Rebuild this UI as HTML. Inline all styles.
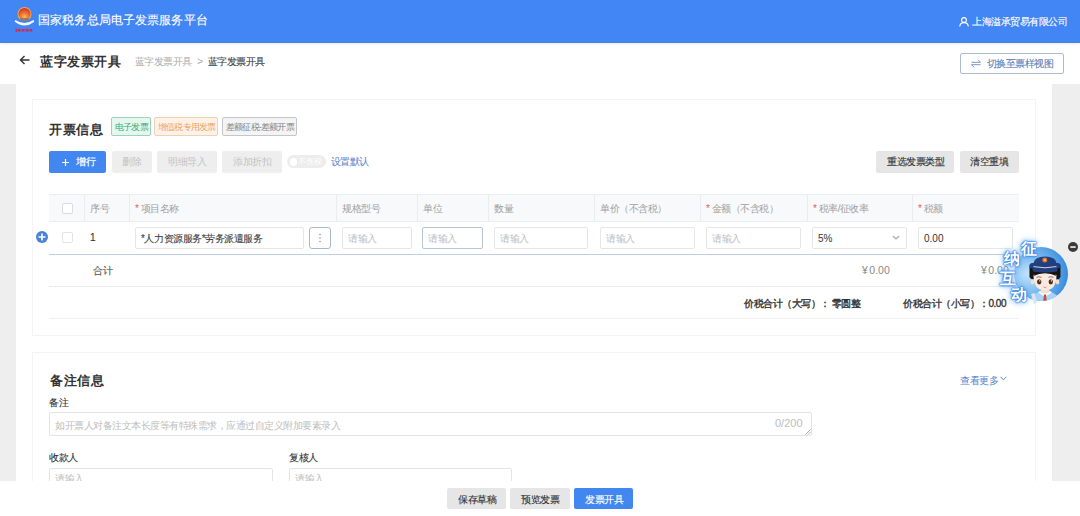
<!DOCTYPE html>
<html><head><meta charset="utf-8">
<style>
*{box-sizing:border-box;margin:0;padding:0}
html,body{width:1080px;height:516px;overflow:hidden;background:#fff;font-family:"Liberation Sans",sans-serif;color:#333}
.a{position:absolute}
.t{position:absolute;white-space:nowrap;line-height:1;font-size:10px;letter-spacing:-0.5px;-webkit-text-stroke-width:0.12px}
.h{font-size:13px;font-weight:bold;letter-spacing:0.5px;color:#333;-webkit-text-stroke-width:0}
.gray{position:absolute;background:#eeeeee}
.card{position:absolute;border:1px solid #f4f4f4;background:#fff}
.bx{position:absolute;border-radius:2px}
.tag{position:absolute;border:1px solid;border-radius:2px}
.inp{position:absolute;border:1px solid #e5e6ea;border-radius:2px;background:#fff;top:227px;height:22px}
.ph{color:#bdbdbd;-webkit-text-stroke-width:0}
.ns{-webkit-text-stroke-width:0}
.th{position:absolute;top:195px;height:26px;width:1px;background:#e9ecf0}
.req{color:#e06060}
</style></head><body>
<div class="a" style="left:0;top:0;width:1080px;height:43px;background:#4285f4;border-bottom:1px solid #4a83d8;box-shadow:0 1px 2px rgba(60,90,120,0.12)"></div>
<!-- logo -->
<svg class="a" style="left:14px;top:6px" width="20" height="28" viewBox="0 0 20 28">
 <defs><radialGradient id="lg" cx="0.5" cy="0.75" r="0.7"><stop offset="0" stop-color="#f7c25a"/><stop offset="0.45" stop-color="#ee7a35"/><stop offset="1" stop-color="#d8342a"/></radialGradient></defs>
 <circle cx="10.5" cy="8" r="7" fill="#f0a848"/>
 <circle cx="10.5" cy="8" r="6" fill="url(#lg)"/>
 <path d="M6 12 L15 12 L14 15 L7 15Z" fill="#7a6a70" opacity="0.7"/>
 <path d="M0.5 15.5 Q10.5 23.5 20.5 15.5 L19.5 14 Q10.5 20 1.5 14Z" fill="#f4f6fb"/>
 <path d="M1.6 22.5h1.3v3.5h-1.3zM3.6 23h3v2.5h-3zM7.6 23h3v2.5h-3zM11.6 23h3v2.5h-3zM15.6 23h2.6v2.5h-2.6z" fill="#c4305a"/>
</svg>
<div class="t" style="left:38px;top:14px;font-size:12px;letter-spacing:0.13px;color:#fff">国家税务总局电子发票服务平台</div>
<svg class="a" style="left:959px;top:17px" width="10" height="10" viewBox="0 0 10 10"><circle cx="5" cy="3" r="2.4" fill="none" stroke="#fff" stroke-width="1.1"/><path d="M0.8 9.6 Q0.8 5.6 5 5.6 Q9.2 5.6 9.2 9.6" fill="none" stroke="#fff" stroke-width="1.1"/></svg>
<div class="t" style="left:972px;top:17px;letter-spacing:-0.45px;color:#fff">上海溢承贸易有限公司</div>

<!-- title row -->
<svg class="a" style="left:19px;top:55px" width="11" height="10" viewBox="0 0 11 10"><path d="M10.5 5H1.5M5.5 1L1.5 5L5.5 9" fill="none" stroke="#333" stroke-width="1.4"/></svg>
<div class="t h" style="left:40px;top:55px">蓝字发票开具</div>
<div class="t" style="left:135px;top:57px;letter-spacing:-0.6px;color:#aaa;-webkit-text-stroke-width:0">蓝字发票开具</div>
<div class="t" style="left:197px;top:57px;color:#aaa;-webkit-text-stroke-width:0">&gt;</div>
<div class="t" style="left:208px;top:57px;letter-spacing:-0.6px;color:#444">蓝字发票开具</div>
<div class="bx" style="left:960px;top:53px;width:104px;height:21px;border:1px solid #a9bcd2;background:#fff"></div>
<svg class="a" style="left:971px;top:59px" width="10" height="9" viewBox="0 0 10 9"><path d="M0.5 3.3H9.5L7 0.8M9.5 5.7H0.5L3 8.2" fill="none" stroke="#6a8cc0" stroke-width="0.9"/></svg>
<div class="t" style="left:987px;top:59px;letter-spacing:-0.55px;color:#5c80b8">切换至票样视图</div>

<!-- gray side bars -->
<div class="gray" style="left:0;top:84px;width:16px;height:397px"></div>
<div class="gray" style="left:1052px;top:84px;width:28px;height:397px"></div>

<!-- card 1 -->
<div class="card" style="left:32px;top:99px;width:1004px;height:237px"></div>
<div class="t h" style="left:49px;top:123px">开票信息</div>
<div class="tag" style="left:111px;top:117px;width:40px;height:19px;border-color:#9cd3bd;background:#e4f8ef"></div>
<div class="t" style="left:115px;top:122.5px;font-size:9px;letter-spacing:-0.8px;color:#3aa878;-webkit-text-stroke-width:0">电子发票</div>
<div class="tag" style="left:154px;top:117px;width:64px;height:19px;border-color:#f0d3ad;background:#fdf2ea"></div>
<div class="t" style="left:158px;top:122.5px;font-size:9px;letter-spacing:-0.8px;color:#f0a45c;-webkit-text-stroke-width:0">增值税专用发票</div>
<div class="tag" style="left:222px;top:117px;width:75px;height:19px;border-color:#c4c6cc;background:#f4f4f5"></div>
<div class="t" style="left:226px;top:122.5px;font-size:9px;letter-spacing:-0.8px;color:#858585;-webkit-text-stroke-width:0">差额征税-差额开票</div>

<div class="bx" style="left:49px;top:151px;width:57px;height:22px;background:#4286f0"></div>
<svg class="a" style="left:62px;top:159px" width="7" height="7" viewBox="0 0 7 7"><path d="M3.5 0V7M0 3.5H7" stroke="#fff" stroke-width="1.2"/></svg>
<div class="t" style="left:76px;top:157px;color:#fff;letter-spacing:-0.3px;-webkit-text-stroke-width:0.2px">增行</div>
<div class="bx" style="left:112px;top:151px;width:40px;height:22px;background:#eeeeee"></div>
<div class="t" style="left:122px;top:157px;color:#c4c4c4;-webkit-text-stroke-width:0">删除</div>
<div class="bx" style="left:157px;top:151px;width:60px;height:22px;background:#eeeeee"></div>
<div class="t" style="left:168px;top:157px;color:#c4c4c4;-webkit-text-stroke-width:0">明细导入</div>
<div class="bx" style="left:222px;top:151px;width:60px;height:22px;background:#eeeeee"></div>
<div class="t" style="left:233px;top:157px;color:#c4c4c4;-webkit-text-stroke-width:0">添加折扣</div>
<div class="a" style="left:287px;top:155px;width:39px;height:13px;border-radius:7px;background:#ededed"></div>
<div class="a" style="left:289.5px;top:158px;width:7.5px;height:7.5px;border-radius:50%;background:#fff"></div>
<div class="t" style="left:298px;top:158px;font-size:8px;letter-spacing:0;color:#fff;-webkit-text-stroke-width:0">不含税</div>
<div class="t" style="left:331px;top:157px;letter-spacing:-0.6px;color:#5282cc;-webkit-text-stroke-width:0">设置默认</div>
<div class="bx" style="left:876px;top:151px;width:78px;height:22px;background:#e6e6e6"></div>
<div class="t" style="left:887px;top:157px;color:#333">重选发票类型</div>
<div class="bx" style="left:960px;top:151px;width:59px;height:22px;background:#e6e6e6"></div>
<div class="t" style="left:970px;top:157px;color:#333">清空重填</div>

<!-- table -->
<div class="a" style="left:49px;top:194px;width:970px;height:28px;background:#f8f9fb;border-top:1px solid #eceef2;border-bottom:1px solid #eceef2"></div>
<div class="bx" style="left:61.5px;top:202.5px;width:11px;height:11px;border:1px solid #d8dce3;background:#fff"></div>
<div class="th" style="left:84px"></div><div class="th" style="left:129px"></div><div class="th" style="left:336px"></div><div class="th" style="left:417px"></div><div class="th" style="left:488px"></div><div class="th" style="left:594px"></div><div class="th" style="left:700px"></div><div class="th" style="left:807px"></div><div class="th" style="left:912px"></div>
<div class="t" style="left:90px;top:204px;color:#a0a0a0;-webkit-text-stroke-width:0">序号</div>
<div class="t" style="left:135px;top:204px;color:#a0a0a0;-webkit-text-stroke-width:0"><span class="req">*</span> 项目名称</div>
<div class="t" style="left:342px;top:204px;color:#a0a0a0;-webkit-text-stroke-width:0">规格型号</div>
<div class="t" style="left:423px;top:204px;color:#a0a0a0;-webkit-text-stroke-width:0">单位</div>
<div class="t" style="left:494px;top:204px;color:#a0a0a0;-webkit-text-stroke-width:0">数量</div>
<div class="t" style="left:600px;top:204px;color:#a0a0a0;-webkit-text-stroke-width:0">单价（不含税）</div>
<div class="t" style="left:706px;top:204px;color:#a0a0a0;-webkit-text-stroke-width:0"><span class="req">*</span> 金额（不含税）</div>
<div class="t" style="left:813px;top:204px;color:#a0a0a0;-webkit-text-stroke-width:0"><span class="req">*</span> 税率/征收率</div>
<div class="t" style="left:918px;top:204px;color:#a0a0a0;-webkit-text-stroke-width:0"><span class="req">*</span> 税额</div>

<svg class="a" style="left:36px;top:231px" width="12" height="12" viewBox="0 0 12 12"><circle cx="6" cy="6" r="6" fill="#4a82d8"/><path d="M6 2.5V9.5M2.5 6H9.5" stroke="#fff" stroke-width="1.6"/></svg>
<div class="bx" style="left:62px;top:232px;width:11px;height:11px;border:1px solid #e0e3e8;background:#fff"></div>
<div class="t" style="left:90px;top:233px;color:#333;letter-spacing:0;-webkit-text-stroke-width:0.1px">1</div>
<div class="inp" style="left:135px;width:169px"></div>
<div class="t" style="left:141px;top:234px;letter-spacing:-0.46px;color:#3c3c3c">*人力资源服务*劳务派遣服务</div>
<div class="inp" style="left:309px;width:22px;border-color:#aab9c9;border-radius:3px"></div>
<svg class="a" style="left:319px;top:233px" width="2" height="10" viewBox="0 0 2 10"><circle cx="1" cy="1.5" r="0.75" fill="#888"/><circle cx="1" cy="5" r="0.75" fill="#888"/><circle cx="1" cy="8.5" r="0.75" fill="#888"/></svg>
<div class="inp" style="left:342px;width:70px"></div><div class="t ph" style="left:348px;top:234px">请输入</div>
<div class="inp" style="left:422px;width:61px;border-color:#b7c5d4"></div><div class="t ph" style="left:428px;top:234px">请输入</div>
<div class="inp" style="left:494px;width:94px"></div><div class="t ph" style="left:500px;top:234px">请输入</div>
<div class="inp" style="left:600px;width:95px"></div><div class="t ph" style="left:606px;top:234px">请输入</div>
<div class="inp" style="left:706px;width:95px"></div><div class="t ph" style="left:712px;top:234px">请输入</div>
<div class="inp" style="left:812px;width:95px"></div><div class="t" style="left:818px;top:234px;color:#333;letter-spacing:0;-webkit-text-stroke-width:0">5%</div>
<svg class="a" style="left:892px;top:235px" width="8" height="5" viewBox="0 0 8 5"><path d="M0.9 1L4 4L7.1 1" fill="none" stroke="#aaa" stroke-width="1.2"/></svg>
<div class="inp" style="left:918px;width:95px"></div><div class="t" style="left:924px;top:234px;color:#333;letter-spacing:0;-webkit-text-stroke-width:0">0.00</div>
<div class="a" style="left:49px;top:254px;width:970px;height:1px;background:#bcd0e5"></div>

<div class="t" style="left:93px;top:266px;color:#555">合计</div>
<div class="t" style="left:862px;top:265px;font-size:10.5px;letter-spacing:0;color:#888;-webkit-text-stroke-width:0"><span style="margin-right:1.5px">¥</span>0.00</div>
<div class="t" style="left:981px;top:265px;font-size:10.5px;letter-spacing:0;color:#888;-webkit-text-stroke-width:0"><span style="margin-right:1.5px">¥</span>0.00</div>
<div class="a" style="left:49px;top:286px;width:970px;height:1px;background:#ebebeb"></div>
<div class="t" style="left:744px;top:299px;color:#333;-webkit-text-stroke-width:0.35px">价税合计（大写）：&nbsp;零圆整</div>
<div class="t" style="left:903px;top:299px;color:#333;-webkit-text-stroke-width:0.35px">价税合计（小写）：0.00</div>
<div class="a" style="left:49px;top:318px;width:970px;height:1px;background:#f0f0f0"></div>

<!-- card 2 -->
<div class="card" style="left:32px;top:352px;width:1004px;height:200px"></div>
<div class="t h" style="left:50px;top:374px">备注信息</div>
<div class="t" style="left:960px;top:376px;color:#5585d2;-webkit-text-stroke-width:0">查看更多</div>
<svg class="a" style="left:1000px;top:376px" width="7" height="5" viewBox="0 0 7 5"><path d="M0.6 0.8L3.5 3.8L6.4 0.8" fill="none" stroke="#5a88d4" stroke-width="1"/></svg>
<div class="t" style="left:49px;top:398px;color:#333">备注</div>
<div class="bx" style="left:49px;top:412px;width:763px;height:24px;border:1px solid #e4e4e4"></div>
<div class="t ph" style="left:55px;top:421px">如开票人对备注文本长度等有特殊需求，应通过自定义附加要素录入</div>
<div class="t ph" style="left:775px;top:418px;font-size:11px;letter-spacing:0">0/200</div>
<svg class="a" style="left:805px;top:429px" width="6" height="6" viewBox="0 0 6 6"><path d="M0.5 5.5L5.5 0.5M3 5.5L5.5 3" stroke="#999" stroke-width="0.8"/></svg>
<div class="t" style="left:49px;top:453px;color:#333">收款人</div>
<div class="t" style="left:289px;top:453px;color:#333">复核人</div>
<div class="bx" style="left:49px;top:468px;width:224px;height:24px;border:1px solid #e4e4e4"></div>
<div class="bx" style="left:289px;top:468px;width:223px;height:24px;border:1px solid #e4e4e4"></div>
<div class="t ph" style="left:55px;top:474px">请输入</div>
<div class="t ph" style="left:295px;top:474px">请输入</div>

<!-- footer -->
<div class="a" style="left:0;top:481px;width:1080px;height:35px;background:#fff"></div>
<div class="bx" style="left:447px;top:488px;width:59px;height:21px;background:#e6e6e6"></div>
<div class="t" style="left:458px;top:495px;color:#333;letter-spacing:-0.5px">保存草稿</div>
<div class="bx" style="left:510px;top:488px;width:60px;height:21px;background:#e6e6e6"></div>
<div class="t" style="left:521px;top:495px;color:#333;letter-spacing:-0.5px">预览发票</div>
<div class="bx" style="left:574px;top:488px;width:59px;height:21px;background:#4286f0"></div>
<div class="t" style="left:585px;top:495px;color:#fff;letter-spacing:-0.5px">发票开具</div>

<!-- mascot -->
<svg class="a" style="left:995px;top:235px" width="85" height="71" viewBox="0 0 85 71">
 <defs>
  <radialGradient id="cg" cx="0.25" cy="0.5" r="0.8">
   <stop offset="0" stop-color="#c2e2fb"/><stop offset="0.45" stop-color="#7dbdf0"/><stop offset="1" stop-color="#2f84de"/>
  </radialGradient>
  <clipPath id="cc"><circle cx="46" cy="39" r="27"/></clipPath>
 </defs>
 <circle cx="46" cy="39" r="27" fill="url(#cg)"/>
 <g clip-path="url(#cc)">
  <path d="M34 72 Q35 60 43 57.5 L57 57.5 Q65 60 66 72Z" fill="#a9d3f4"/>
  <path d="M43 57.5 L50 62 L57 57.5 L55 56 L45 56Z" fill="#f4f8fc"/>
  <path d="M49 59.5 L51 59.5 L52 69 L48 69Z" fill="#d04a3c"/>
 </g>
 <rect x="46" y="52" width="8" height="6" fill="#f6dccd"/>
 <path d="M34.5 34 Q34 29 38 28 L62 28 Q66 29 65.5 34 L65.5 42 Q64 45 61 44 L39 44 Q36 45 34.5 42Z" fill="#141414"/>
 <ellipse cx="37.5" cy="47" rx="1.8" ry="2.4" fill="#f6dccd"/>
 <ellipse cx="62.5" cy="47" rx="1.8" ry="2.4" fill="#f6dccd"/>
 <path d="M38.5 40 Q38.5 55.5 50 55.5 Q61.5 55.5 61.5 40 Q56 37 50 37 Q44 37 38.5 40Z" fill="#fbe8df"/>
 <path d="M38.5 41 Q41 35.5 50 35.5 Q59 35.5 61.5 41 Q56 38.3 50 38.3 Q44 38.3 38.5 41Z" fill="#141414"/>
 <path d="M41.5 42.3 Q44 41.2 46.5 42.3 M53.5 42.3 Q56 41.2 58.5 42.3" fill="none" stroke="#3a2a26" stroke-width="0.6"/>
 <ellipse cx="44.2" cy="46.8" rx="2.2" ry="2.6" fill="#4a2c22"/>
 <ellipse cx="55.8" cy="46.8" rx="2.2" ry="2.6" fill="#4a2c22"/>
 <circle cx="44.8" cy="45.9" r="0.7" fill="#fff"/><circle cx="56.4" cy="45.9" r="0.7" fill="#fff"/>
 <path d="M48.6 52.2 Q50 53 51.4 52.2" fill="none" stroke="#c96a5a" stroke-width="0.6"/>
 <path d="M34.3 31 Q34.5 28 37.5 28 L38.5 28 Q39.5 21.5 50 21.5 Q60.5 21.5 61.5 28 L62.5 28 Q65.5 28 65.7 31 Q65.5 33.5 62.5 33.5 L62 36.5 Q50 38.5 38 36.5 L37.5 33.5 Q34.5 33.5 34.3 31Z" fill="#213f7c"/>
 <path d="M38.5 31.6 Q50 34 61.5 31.6" fill="none" stroke="#dfe7f3" stroke-width="0.9"/>
 <circle cx="49.8" cy="25" r="2.5" fill="#e96a3a"/>
 <circle cx="49.8" cy="25" r="1.3" fill="#f3b83e"/>
 <path d="M36 59 L39 69 L42 68 L39.5 58Z" fill="#dde6ee"/>
</svg>
<div class="a" style="left:995px;top:235px;width:50px;height:71px;font-size:16px;line-height:1;font-weight:bold;color:#fff;text-shadow:0 0 1px #1f6fdc,0 0 1.5px #1f6fdc,0 0 2px #2a78e0,0 0 4px #4a95ea,0 0 8px #7ab8f2">
 <div class="a" style="left:26px;top:6px">征</div>
 <div class="a" style="left:9px;top:16px">纳</div>
 <div class="a" style="left:5px;top:36px">互</div>
 <div class="a" style="left:16px;top:52px">动</div>
</div>
<svg class="a" style="left:1068px;top:242px" width="10" height="10" viewBox="0 0 10 10"><circle cx="5" cy="5" r="5" fill="#3a3a3a"/><rect x="2.3" y="4.3" width="5.4" height="1.5" fill="#fff"/></svg>
</body></html>
